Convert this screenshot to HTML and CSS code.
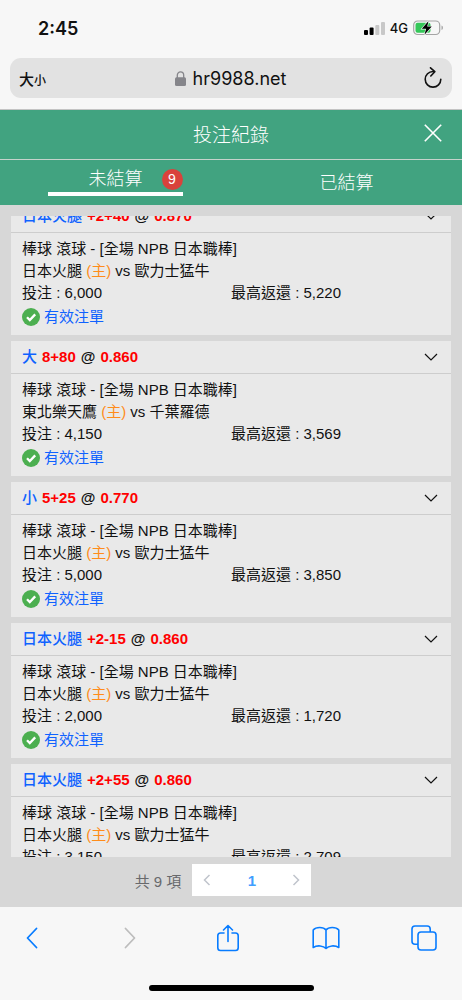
FILE: index.html
```html
<!DOCTYPE html>
<html lang="zh-Hant">
<head>
<meta charset="utf-8">
<meta name="viewport" content="width=device-width, initial-scale=1">
<title>投注紀錄</title>
<link rel="stylesheet" href="styles.css">
</head>
<body>
<svg class="sprite" aria-hidden="true">
  <symbol id="chevron" viewBox="0 0 14 8"><path d="M1 1l6 6 6-6" fill="none" stroke="currentColor" stroke-width="1.2"/></symbol>
  <symbol id="check" viewBox="0 0 18 18"><circle cx="9" cy="9" r="9" fill="#4caf50"/><path d="M5 9.300l2.800 2.800L13.200 6.400" fill="none" stroke="#fff" stroke-width="2.300"/></symbol>
</svg>
<div class="phone">
  <div class="status">
    <span class="time">2:45</span>
    <div class="indicators">
      <svg width="21" height="13" viewBox="0 0 21 13" aria-hidden="true"><rect y="8" width="4" height="5" rx="1"/><rect x="5.600" y="5.500" width="4" height="7.500" rx="1"/><rect x="11.300" y="3" width="4" height="10" rx="1" fill="#c8c8c8"/><rect x="17" width="4" height="13" rx="1" fill="#c8c8c8"/></svg>
      <span class="network">4G</span>
      <svg width="31" height="16" viewBox="0 0 31 16" aria-hidden="true"><rect x=".7" y="1" width="26" height="13.500" rx="4" fill="none" stroke="#a5a5a5" stroke-width="1.200"/><path d="M28.500 5.500v4.500q1.500-.5 1.500-2.250T28.500 5.500z" fill="#a5a5a5"/><rect x="2.500" y="2.800" width="15" height="10" rx="2" fill="#35c759"/><path d="M15.500 1L8.800 8.800h4.300L11.500 14.800l7.200-8.200h-4.500z" stroke="#f7f7f7" stroke-width="1.200" paint-order="stroke"/></svg>
    </div>
  </div>
  <div class="address-row">
    <div class="address">
      <button class="text-size" aria-label="文字大小">大<small>小</small></button>
      <span class="url"><svg width="11" height="15" viewBox="0 0 11 15" aria-hidden="true"><path d="M2.300 7V4.300a3.200 3.500 0 0 1 6.400 0V7" fill="none" stroke="#85858a" stroke-width="1.300"/><rect y="6.300" width="11" height="8.700" rx="1.500" fill="#85858a"/></svg>hr9988.net</span>
      <button class="reload" aria-label="重新載入"><svg width="18" height="22" viewBox="0 0 18 22" aria-hidden="true"><path d="M9.500 4.500H9a7.800 7.800 0 1 0 7.800 7.800M6.500.8l4.300 3.900-4 4.300" fill="none" stroke="#111" stroke-width="1.600" stroke-linecap="round" stroke-linejoin="round"/></svg></button>
    </div>
  </div>
  <header class="title-bar">
    <h1>投注紀錄</h1>
    <button class="close" aria-label="關閉"><svg width="18" height="18" viewBox="0 0 18 18" aria-hidden="true"><path d="M.8.800l16.400 16.400M17.200.800L.8 17.200" stroke="#fff" stroke-width="1.600"/></svg></button>
  </header>
  <nav class="tabs">
    <button class="tab active"><span class="tab-label">未結算<span class="badge">9</span></span></button>
    <button class="tab"><span class="tab-label">已結算</span></button>
  </nav>
  <main class="content">
    <div class="scroller">
      <div class="bets">
        <article class="bet">
          <h2><span class="pick">日本火腿</span> <span class="odds">+2+40</span> @ <span class="odds">0.870</span><button class="toggle" aria-label="收合"><svg width="14" height="8"><use href="#chevron"/></svg></button></h2>
          <div class="details">
            <p>棒球 滾球 - [全場 NPB 日本職棒]</p>
            <p>日本火腿 <span class="home">(主)</span> vs 歐力士猛牛</p>
            <p class="amounts"><span>投注 : 6,000</span><span>最高返還 : 5,220</span></p>
            <p class="valid"><svg width="18" height="18"><use href="#check"/></svg>有效注單</p>
          </div>
        </article>
        <article class="bet">
          <h2><span class="pick">大</span> <span class="odds">8+80</span> @ <span class="odds">0.860</span><button class="toggle" aria-label="收合"><svg width="14" height="8"><use href="#chevron"/></svg></button></h2>
          <div class="details">
            <p>棒球 滾球 - [全場 NPB 日本職棒]</p>
            <p>東北樂天鷹 <span class="home">(主)</span> vs 千葉羅德</p>
            <p class="amounts"><span>投注 : 4,150</span><span>最高返還 : 3,569</span></p>
            <p class="valid"><svg width="18" height="18"><use href="#check"/></svg>有效注單</p>
          </div>
        </article>
        <article class="bet">
          <h2><span class="pick">小</span> <span class="odds">5+25</span> @ <span class="odds">0.770</span><button class="toggle" aria-label="收合"><svg width="14" height="8"><use href="#chevron"/></svg></button></h2>
          <div class="details">
            <p>棒球 滾球 - [全場 NPB 日本職棒]</p>
            <p>日本火腿 <span class="home">(主)</span> vs 歐力士猛牛</p>
            <p class="amounts"><span>投注 : 5,000</span><span>最高返還 : 3,850</span></p>
            <p class="valid"><svg width="18" height="18"><use href="#check"/></svg>有效注單</p>
          </div>
        </article>
        <article class="bet">
          <h2><span class="pick">日本火腿</span> <span class="odds">+2-15</span> @ <span class="odds">0.860</span><button class="toggle" aria-label="收合"><svg width="14" height="8"><use href="#chevron"/></svg></button></h2>
          <div class="details">
            <p>棒球 滾球 - [全場 NPB 日本職棒]</p>
            <p>日本火腿 <span class="home">(主)</span> vs 歐力士猛牛</p>
            <p class="amounts"><span>投注 : 2,000</span><span>最高返還 : 1,720</span></p>
            <p class="valid"><svg width="18" height="18"><use href="#check"/></svg>有效注單</p>
          </div>
        </article>
        <article class="bet">
          <h2><span class="pick">日本火腿</span> <span class="odds">+2+55</span> @ <span class="odds">0.860</span><button class="toggle" aria-label="收合"><svg width="14" height="8"><use href="#chevron"/></svg></button></h2>
          <div class="details">
            <p>棒球 滾球 - [全場 NPB 日本職棒]</p>
            <p>日本火腿 <span class="home">(主)</span> vs 歐力士猛牛</p>
            <p class="amounts"><span>投注 : 3,150</span><span>最高返還 : 2,709</span></p>
          </div>
        </article>
      </div>
    </div>
    <nav class="pager" aria-label="分頁">
      <span>共 9 項</span>
      <div class="pages">
        <button aria-label="上一頁"><svg width="8" height="12" viewBox="0 0 8 12"><path d="M6.500 1L1.500 6l5 5" fill="none" stroke="#c0c4cc" stroke-width="1.500"/></svg></button>
        <button class="current">1</button>
        <button aria-label="下一頁"><svg width="8" height="12" viewBox="0 0 8 12"><path d="M1.500 1l5 5-5 5" fill="none" stroke="#c0c4cc" stroke-width="1.500"/></svg></button>
      </div>
    </nav>
  </main>
  <footer class="browser-bar">
    <div class="tools">
      <button aria-label="上一頁"><svg width="12" height="22" viewBox="0 0 12 22"><path d="M10.500 1.500L1.500 11l9 9.500" fill="none" stroke="currentColor" stroke-width="1.800" stroke-linecap="round" stroke-linejoin="round"/></svg></button>
      <button class="disabled" aria-label="下一頁"><svg width="12" height="22" viewBox="0 0 12 22"><path d="M1.500 1.500l9 9.500-9 9.500" fill="none" stroke="currentColor" stroke-width="1.800" stroke-linecap="round" stroke-linejoin="round"/></svg></button>
      <button aria-label="分享"><svg width="24" height="28" viewBox="-1 0 24 28"><path d="M7 9H3.500Q.8 9 .8 11.800v12Q.8 26.500 3.500 26.500h15q2.700 0 2.700-2.700v-12Q21.200 9 18.500 9H15M11 17.500V1.500M6.500 6L11 1.500 15.500 6" fill="none" stroke="currentColor" stroke-width="1.600" stroke-linecap="round" stroke-linejoin="round"/></svg></button>
      <button aria-label="書籤"><svg width="28" height="24" viewBox="0 0 28 24"><path d="M14 22.500C11.500 19.500 5 19 1.200 21.500V4C4 .7 11.500.7 14 4c2.500-3.300 10-3.300 12.800 0v17.500C23 19 16.500 19.500 14 22.500zV4" fill="none" stroke="currentColor" stroke-width="1.600" stroke-linejoin="round"/></svg></button>
      <button aria-label="分頁"><svg width="26" height="26" viewBox="0 0 26 26"><path d="M7 19.200H4q-3 0-3-3V4q0-3 3-3h12.200q3 0 3 3v3" fill="none" stroke="currentColor" stroke-width="1.600"/><rect x="7" y="7" width="18" height="18" rx="3" fill="none" stroke="currentColor" stroke-width="1.600"/></svg></button>
    </div>
    <div class="home-indicator"></div>
  </footer>
</div>
</body>
</html>
```
FILE: styles.css
```css
* { box-sizing: border-box; }
body {
  margin: 0;
  background: #f7f7f7;
  color: #111;
  font-family: "Liberation Sans", "Noto Sans CJK TC", sans-serif;
  font-size: 15px;
}
h1, h2, p { margin: 0; }
svg { display: block; flex: none; }
button {
  border: 0;
  padding: 0;
  background: none;
  color: inherit;
  font: inherit;
}
.sprite { display: none; }
.phone {
  display: flex;
  flex-direction: column;
  height: 100vh;
}
.status {
  display: flex;
  justify-content: space-between;
  align-items: center;
  height: 58px;
  padding: 0 18px 2px 38px;
  font-family: Inter, sans-serif;
}
.time { font-size: 18px; font-weight: 600; }
.indicators { display: flex; align-items: center; gap: 5px; }
.network { font-size: 13px; font-weight: 500; }
.address-row {
  padding: 0 10px 11px;
  border-bottom: 1px solid #c4c4c4;
}
.address {
  display: grid;
  grid-template-columns: 1fr auto 1fr;
  align-items: center;
  height: 40px;
  padding: 0 10px 0 9px;
  border-radius: 11px;
  background: #e2e2e2;
}
.text-size {
  justify-self: start;
  font-weight: 500;
}
.text-size small { font-size: 12px; }
.url {
  display: flex;
  align-items: center;
  gap: 7px;
  font-family: Inter, sans-serif;
  font-size: 18px;
}
.reload { justify-self: end; }
.title-bar {
  display: grid;
  grid-template-columns: 1fr auto 1fr;
  align-items: center;
  height: 50px;
  padding: 0 20px 3px;
  border-bottom: 1px solid #c5d3cc;
  background: #41a380;
  color: #fff;
}
.title-bar h1 {
  grid-column: 2;
  font-size: 19px;
  font-weight: 300;
}
.close { justify-self: end; }
.tabs {
  display: grid;
  grid-template-columns: 1fr 1fr;
  height: 45px;
  background: #41a380;
  color: #fff;
  font-size: 18px;
  font-weight: 300;
}
.tab {
  display: flex;
  align-items: center;
  justify-content: center;
}
.tab-label { position: relative; line-height: 26px; }
.active {
  justify-self: center;
  align-self: start;
  width: 135px;
  height: 36px;
  padding-top: 5px;
  border-bottom: 4px solid #fff;
}
.badge {
  position: absolute;
  top: 3px;
  left: 73px;
  width: 21px;
  height: 21px;
  border-radius: 50%;
  background: #d9423b;
  font-size: 14px;
  line-height: 21px;
  text-align: center;
}
.content {
  display: flex;
  flex: 1;
  flex-direction: column;
  min-height: 0;
  padding: 11px 11px 0;
  background: #d7d7d7;
}
.scroller {
  flex: 1;
  min-height: 0;
  overflow: hidden;
}
.bets {
  display: flex;
  flex-direction: column;
  gap: 6px;
  margin-top: -16px;
}
.bet { background: #e9e9e9; }
.bet h2 {
  display: flex;
  align-items: center;
  gap: 5px;
  height: 33px;
  padding: 0 13px 1px 11px;
  border-bottom: 1px solid #cdcdcd;
  font-size: 15px;
  font-weight: 700;
  line-height: 22px;
}
.pick { color: #0f62ff; font-weight: 500; }
.odds { color: #f00; }
.toggle { margin-left: auto; }
.details { padding: 5px 11px; line-height: 22px; }
.amounts { display: grid; grid-template-columns: 1fr 1fr; }
.home { color: #ff8c1a; }
.valid {
  display: flex;
  align-items: center;
  gap: 4px;
  height: 26px;
  color: #0f62ff;
}
.pager {
  display: flex;
  align-items: center;
  justify-content: center;
  gap: 11px;
  height: 50px;
  padding: 0 16px 4px 0;
  color: #68696c;
}
.pages {
  display: grid;
  grid-template-columns: 1fr 2fr 1fr;
  width: 119px;
  height: 32px;
  background: #fff;
}
.pages button { display: grid; place-items: center; }
.pages .current { color: #409eff; font-weight: 700; }
.browser-bar {
  display: flex;
  flex-direction: column;
  justify-content: space-between;
  height: 93px;
  padding: 17px 0 9px;
}
.tools {
  display: flex;
  align-items: center;
  justify-content: space-between;
  padding: 0 24px 0 18px;
  color: #087cff;
}
.tools button {
  display: grid;
  place-items: center;
  width: 28px;
}
.tools .disabled { color: #bdbdbd; }
.home-indicator {
  align-self: center;
  width: 165px;
  height: 6px;
  border-radius: 3px;
  background: #000;
}
```
